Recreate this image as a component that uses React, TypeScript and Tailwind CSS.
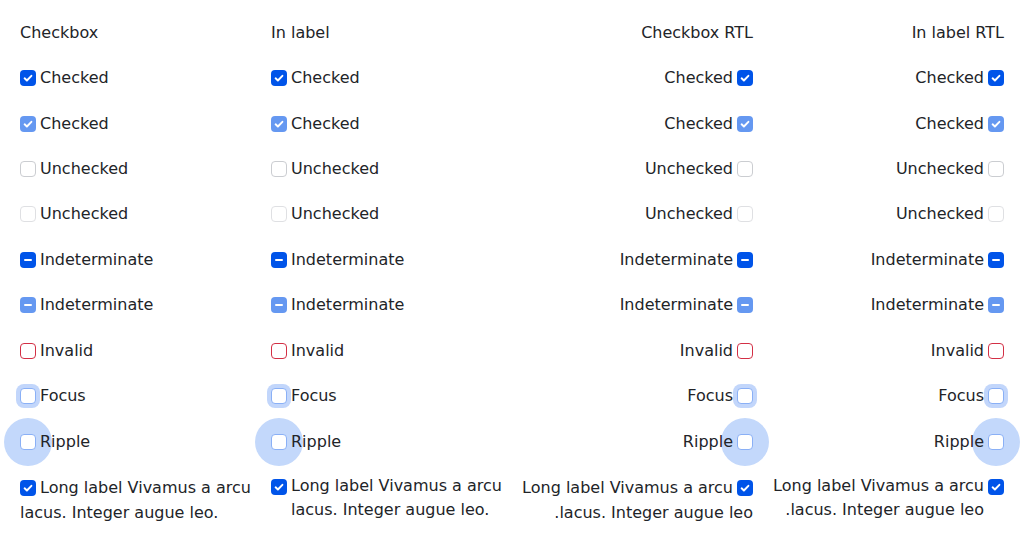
type State = 'checked' | 'unchecked' | 'indeterminate';

type BoxProps = {
  state: State;
  disabled?: boolean;
  invalid?: boolean;
  focus?: boolean;
  ripple?: boolean;
};

function Box({ state, disabled, invalid, focus, ripple }: BoxProps) {
  const filled = state !== 'unchecked';
  let cls = 'relative inline-flex shrink-0 w-4 h-4 rounded-[4px] items-center justify-center box-border ';
  if (filled) cls += 'bg-[#0054e9] ';
  else if (invalid) cls += 'border border-[#d32f45] bg-white ';
  else if (focus || ripple) cls += 'border border-[#8ab0f6] bg-white ';
  else cls += 'border border-[#cbcdd1] bg-white ';
  if (focus) cls += 'shadow-[0_0_0_4px_#c2d6fb] ';
  if (disabled) cls += 'opacity-60 ';

  return (
    <span className={cls}>
      {ripple && (
        <span className="absolute -z-10 left-1/2 top-1/2 -translate-x-1/2 -translate-y-1/2 w-12 h-12 rounded-full bg-[#c3d8fb]" />
      )}
      {state === 'checked' && (
        <svg width="16" height="16" viewBox="0 0 16 16" fill="none">
          <polyline points="4.6,8.3 6.9,10.5 11.4,5.8" stroke="white" strokeWidth="1.9" strokeLinecap="round" strokeLinejoin="round" />
        </svg>
      )}
      {state === 'indeterminate' && (
        <svg width="16" height="16" viewBox="0 0 16 16" fill="none">
          <line x1="5" y1="8" x2="11" y2="8" stroke="white" strokeWidth="2" strokeLinecap="round" />
        </svg>
      )}
    </span>
  );
}

const rows: { label: string; box: BoxProps }[] = [
  { label: 'Checked', box: { state: 'checked' } },
  { label: 'Checked', box: { state: 'checked', disabled: true } },
  { label: 'Unchecked', box: { state: 'unchecked' } },
  { label: 'Unchecked', box: { state: 'unchecked', disabled: true } },
  { label: 'Indeterminate', box: { state: 'indeterminate' } },
  { label: 'Indeterminate', box: { state: 'indeterminate', disabled: true } },
  { label: 'Invalid', box: { state: 'unchecked', invalid: true } },
  { label: 'Focus', box: { state: 'unchecked', focus: true } },
  { label: 'Ripple', box: { state: 'unchecked', ripple: true } },
];

const longText = 'Long label Vivamus a arcu lacus. Integer augue leo.';

// checkbox sits inline with the text, text wraps under it
function InlineColumn({ title, rtl }: { title: string; rtl?: boolean }) {
  return (
    <div dir={rtl ? 'rtl' : 'ltr'} className="isolate">
      <div className="h-[45.45px] flex items-center">{title}</div>
      {rows.map((r, i) => (
        <div key={i} className="h-[45.45px] flex items-center">
          <div>
            <span className="inline-flex align-[-3px] me-1">
              <Box {...r.box} />
            </span>
            {r.label}
          </div>
        </div>
      ))}
      <div className="pt-[11px] leading-[25px]">
        <span className="inline-flex align-[-3px] me-1">
          <Box state="checked" />
        </span>
        {longText}
      </div>
    </div>
  );
}

// checkbox is a separate flex item, label is its own block
function LabelColumn({ title, rtl }: { title: string; rtl?: boolean }) {
  return (
    <div dir={rtl ? 'rtl' : 'ltr'} className="isolate">
      <div className="h-[45.45px] flex items-center">{title}</div>
      {rows.map((r, i) => (
        <div key={i} className="h-[45.45px] flex items-center gap-1">
          <Box {...r.box} />
          <span>{r.label}</span>
        </div>
      ))}
      <div className="pt-[10px] flex items-start gap-1 leading-6">
        <span className="mt-1">
          <Box state="checked" />
        </span>
        <span>{longText}</span>
      </div>
    </div>
  );
}

export default function App() {
  return (
    <div className="w-[1024px] h-[544px] bg-white text-[#222428] text-base font-['DejaVu_Sans',sans-serif] px-5 pt-[10px]">
      <div className="grid grid-cols-4 gap-5">
        <InlineColumn title="Checkbox" />
        <LabelColumn title="In label" />
        <InlineColumn title="Checkbox RTL" rtl />
        <LabelColumn title="In label RTL" rtl />
      </div>
    </div>
  );
}
